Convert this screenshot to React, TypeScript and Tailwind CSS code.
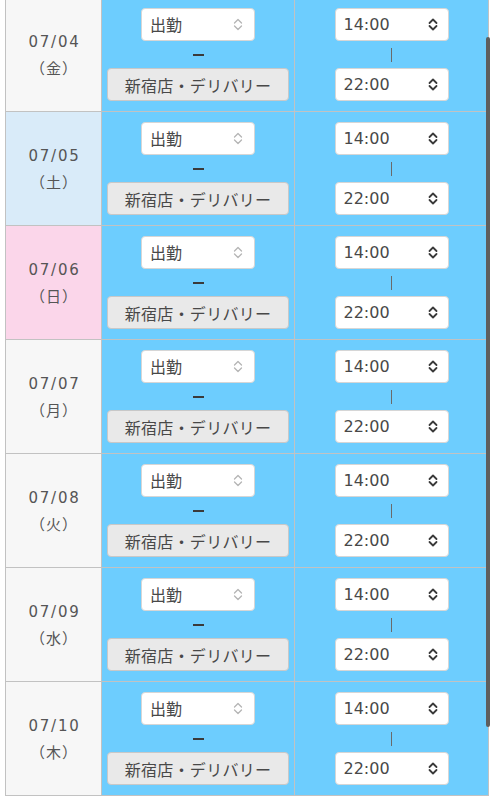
import type { ReactNode } from 'react';

type Day = { date: string; wd: string; kind: 'weekday' | 'sat' | 'sun' };

const DAYS: Day[] = [
  { date: '07/04', wd: '金', kind: 'weekday' },
  { date: '07/05', wd: '土', kind: 'sat' },
  { date: '07/06', wd: '日', kind: 'sun' },
  { date: '07/07', wd: '月', kind: 'weekday' },
  { date: '07/08', wd: '火', kind: 'weekday' },
  { date: '07/09', wd: '水', kind: 'weekday' },
  { date: '07/10', wd: '木', kind: 'weekday' },
];

const JP = { fontFamily: '"Noto Sans CJK JP", sans-serif' };

const Arrows = ({ dark }: { dark?: boolean }) => (
  <svg
    width="10"
    height="13"
    viewBox="0 0 10 13"
    fill="none"
    stroke={dark ? '#3a3a3a' : '#b5b5b5'}
    strokeWidth={dark ? 1.8 : 1.3}
    strokeLinecap="round"
    strokeLinejoin="round"
  >
    <path d="M1.5 5 L5 1.5 L8.5 5" />
    <path d="M1.5 8 L5 11.5 L8.5 8" />
  </svg>
);

const SelectBox = ({ children, dark }: { children: ReactNode; dark?: boolean }) => (
  <div
    className={`flex h-[33px] w-[114px] items-center justify-between rounded-[4px] border border-[#d6d6d6] bg-white pl-[8px] text-[16px] text-[#484848] ${
      dark ? 'pr-[10px]' : 'pr-[11px]'
    }`}
  >
    <span>{children}</span>
    <Arrows dark={dark} />
  </div>
);

const dateBg = (kind: Day['kind']) =>
  kind === 'sat' ? 'bg-[#d9ebf9]' : kind === 'sun' ? 'bg-[#fbd6ea]' : 'bg-[#f7f7f7]';

export default function App() {
  return (
    <div
      className="relative h-[800px] w-[493px] overflow-hidden bg-white"
      style={{ fontFamily: '"DejaVu Sans", "Noto Sans CJK JP", sans-serif' }}
    >
      <table className="ml-[5px] mt-[-3px] border-collapse">
        <tbody>
          {DAYS.map((d) => (
            <tr key={d.date}>
              <td
                className={`h-[114px] w-[96px] border border-[#c2c2c2] p-0 text-center align-middle leading-[26px] text-[#555] ${dateBg(d.kind)}`}
              >
                <div className="pl-[2px] text-[15px] tracking-[1.8px]">{d.date}</div>
                <div className="pl-[1px] text-[15px] tracking-[1px]" style={JP}>
                  （{d.wd}）
                </div>
              </td>
              <td className="h-[114px] w-[193px] border border-[#c2c2c2] bg-[#6dcdfe] p-0 align-top">
                <div className="flex flex-col items-center pt-[10px]">
                  <SelectBox>
                    <span style={JP}>出勤</span>
                  </SelectBox>
                  <div className="flex h-[27px] items-center">
                    <div className="h-[2px] w-[11px] bg-[#3a3a3a]" />
                  </div>
                  <div
                    className="flex h-[33px] w-[182px] items-center justify-center rounded-[4px] border border-[#c8c8c8] bg-[#e9e9e9] text-[16px] tracking-[0.3px] text-[#484848]"
                    style={JP}
                  >
                    新宿店・デリバリー
                  </div>
                </div>
              </td>
              <td className="h-[114px] w-[194px] border border-[#c2c2c2] bg-[#6dcdfe] p-0 align-top">
                <div className="flex flex-col items-center pt-[10px]">
                  <SelectBox dark>14:00</SelectBox>
                  <div className="flex h-[27px] items-center">
                    <div className="h-[14px] w-[1.5px] bg-[#6a6a6a]" />
                  </div>
                  <SelectBox dark>22:00</SelectBox>
                </div>
              </td>
            </tr>
          ))}
        </tbody>
      </table>
      <div className="absolute left-[486px] top-[37px] h-[690px] w-[4px] rounded-full bg-[#5e5e5e]" />
    </div>
  );
}
